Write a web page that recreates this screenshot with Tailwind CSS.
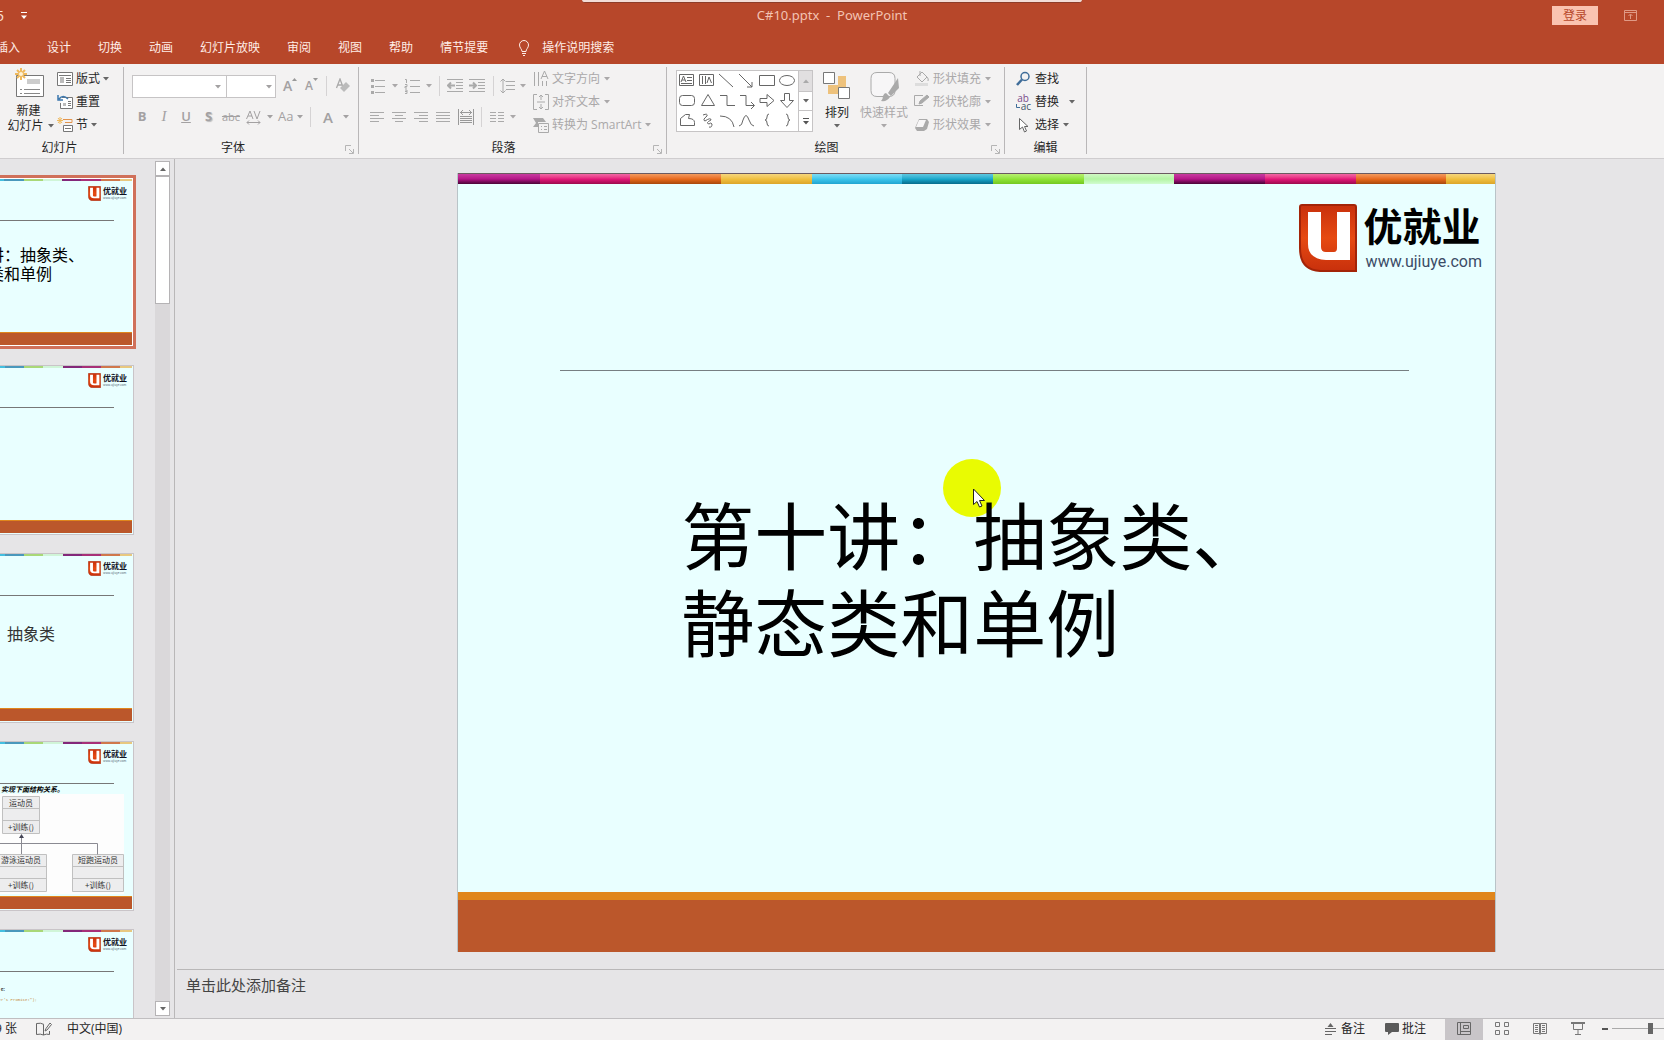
<!DOCTYPE html>
<html lang="zh-CN">
<head>
<meta charset="utf-8">
<meta name="viewport" content="width=device-width, initial-scale=1">
<title>C#10.pptx - PowerPoint</title>
<script src="https://cdn.jsdelivr.net/npm/@tailwindcss/browser@4"></script>
</head>
<body class="h-screen overflow-hidden flex flex-col bg-[#e6e5e7] text-xs text-[#262626] font-['Open_Sans','Noto_Sans_CJK_SC',sans-serif]">

<svg class="absolute w-0 h-0" aria-hidden="true">
  <linearGradient id="lg" x1="0" y1="0" x2="0" y2="1"><stop offset="0" stop-color="#c8300c"/><stop offset=".5" stop-color="#e64a12"/><stop offset="1" stop-color="#c8300c"/></linearGradient>
  <symbol id="caret" viewBox="0 0 6 4"><path d="M0 0h6L3 3.5z" fill="currentColor"/></symbol>
  <symbol id="launch" viewBox="0 0 9 9"><path d="M.5 6V.5H6M4 4l4 4M8.500 4v4.500H4" fill="none" stroke="#b5b5b5"/></symbol>
  <symbol id="ulogo" viewBox="0 0 58 68"><path d="M3 1h52q2 0 2 2v64H21Q1 66 1 44V3q0-2 2-2z" fill="url(#lg)" stroke="#a32408" stroke-width="2"/><path d="M9 8h13v35q0 5 5 5h8q3 0 3-4V8h13v48H27Q9 55 9 40z" fill="#fff"/></symbol>
</svg>

<header class="relative shrink-0 bg-[#b7472a] text-[#fbe3da]">
  <div class="absolute top-0 left-[35%] w-[30%] h-[3px] bg-[#f3dcd6] border-b border-[#8e3c28] rounded-b-sm"></div>
  <div class="grid grid-cols-[1fr_auto_1fr] items-center h-[31px]">
    <div class="flex items-center gap-4 text-sm"><span class="-ml-1 w-2">5</span>
      <button aria-label="自定义快速访问工具栏" class="w-2"><svg class="w-2 h-2" viewBox="0 0 8 8"><path d="M1 .5h6" stroke="#fff"/><path d="M1 3.500h6L4 7z" fill="#fff"/></svg></button>
    </div>
    <h1 class="text-[13px] text-[#f3c3b3] font-['Noto_Sans']">C#10.pptx&nbsp; -&nbsp; PowerPoint</h1>
    <div class="flex justify-end items-center gap-[26px] pr-[27px]">
      <button class="bg-[#fac3b0] text-[#b7472a] w-[46px] h-[19px] leading-[19px]">登录</button>
      <button aria-label="功能区显示选项"><svg class="w-[13px] h-3" viewBox="0 0 13 12" fill="none" stroke="#e09a86"><path d="M.5.5h12v10H.5zM.5 2.500h12M6.500 9V4.500M4.500 6l2-2 2 2"/></svg></button>
    </div>
  </div>
  <nav class="flex items-center gap-[27px] h-[33px] text-[#ffede7]">
    <a href="#" class="-ml-1">插入</a><a href="#">设计</a><a href="#">切换</a><a href="#">动画</a><a href="#">幻灯片放映</a><a href="#">审阅</a><a href="#">视图</a><a href="#">帮助</a><a href="#">情节提要</a>
    <a href="#" class="flex items-center gap-3 pl-[3px]"><svg class="w-3 h-4" viewBox="0 0 12 16" fill="none" stroke="#ffede7"><path d="M4 11.500C4 9 1.500 8 1.500 5a4.500 4.500 0 0 1 9 0c0 3-2.500 4-2.500 6.500zM4 13.500h4M5 15.500h2"/></svg>操作说明搜索</a>
  </nav>
</header>

<section class="shrink-0 flex pt-[3px] pb-1 h-[95px] bg-[#f3f2f2] border-b border-[#cfcdcf]">
  <!-- 幻灯片 -->
  <div class="w-[124px] border-r border-[#b9b7b8] flex flex-col">
    <div class="flex-1 flex">
      <button class="w-[57px] flex flex-col items-center justify-start leading-[15px]">
        <svg class="w-8 h-8 mb-1 shrink-0" viewBox="0 0 32 32"><path d="M3.500 8.500h27v21h-27z" fill="#fff" stroke="#777"/><path d="M14 12h13v5H14z" fill="#ccc"/><path d="M7 22.500h2m2 0h16M7 26.500h2m2 0h16" stroke="#888"/><path d="M8 1v12M2 7h12M4 3l8 8M12 3l-8 8" stroke="#efb95c" stroke-width="2"/><circle cx="8" cy="7" r="2.500" fill="#fff3d8" stroke="#efb95c"/></svg>
        <span>新建</span><span class="flex items-center gap-1 -mr-1 whitespace-nowrap">幻灯片<svg class="w-[6px] h-1 text-[#666]"><use href="#caret"/></svg></span>
      </button>
      <div class="flex flex-col">
        <button class="flex items-center gap-[3px] h-[23px]"><svg class="w-4 h-4" viewBox="0 0 16 16" fill="none" stroke="#777"><path d="M.5 1.500h15v13H.5zM2 4.500h12" fill="#fff"/><path d="M3 6h4v6H3z" fill="#bbb" stroke="none"/><path d="M9 7.500h5M9 9.500h5M9 11.500h5"/></svg>版式<svg class="w-[6px] h-1 text-[#666]"><use href="#caret"/></svg></button>
        <button class="flex items-center gap-[3px] h-[23px]"><svg class="w-4 h-4" viewBox="0 0 16 16" fill="none" stroke="#777"><path d="M5 3.500h10.500v11h-12V9" fill="#fff"/><path d="M6 9h3v3H6z" fill="#bbb" stroke="none"/><path d="M11 7.500h3M11 9.500h3M11 11.500h3"/><path d="M2 5q4-5 9 0M1 1v5h5" stroke="#3d78ae" stroke-width="1.500"/></svg>重置</button>
        <button class="flex items-center gap-[3px] h-[23px]"><svg class="w-4 h-4" viewBox="0 0 16 16" fill="none"><path d="M6 2.500h9v3H8" stroke="#e3944c"/><path d="M6.500 8.500h9v6h-9zM8 11.500h6" stroke="#777" fill="#fff"/><path d="M3 0v7M0 3.500h6M1 1l4 5M5 1L1 6" stroke="#efb95c"/></svg>节<svg class="w-[6px] h-1 text-[#666]"><use href="#caret"/></svg></button>
      </div>
    </div>
    <p class="text-center leading-3 pr-1">幻灯片</p>
  </div>

  <!-- 字体 -->
  <div class="relative w-[235px] border-r border-[#b9b7b8] flex flex-col text-[#a3a1a2]">
    <div class="flex items-center pl-2 pt-[7px] h-[31px]">
      <label class="relative"><select disabled aria-label="字体" class="block appearance-none w-[95px] h-[23px] bg-white border border-[#c6c4c5]"><option></option></select><svg class="absolute right-[6px] top-[10px] w-[6px] h-1"><use href="#caret"/></svg></label>
      <label class="relative -ml-px"><select disabled aria-label="字号" class="block appearance-none w-[50px] h-[23px] bg-white border border-[#c6c4c5]"><option></option></select><svg class="absolute right-1 top-[10px] w-[6px] h-1"><use href="#caret"/></svg></label>
      <button class="ml-[7px] w-[14px] flex text-sm leading-4 font-semibold">A<svg class="w-[5px] h-[3px] shrink-0" viewBox="0 0 5 3"><path d="M0 3h5L2.500 0z" fill="#999"/></svg></button>
      <button class="ml-2 w-[13px] flex text-xs leading-4 font-semibold">A<svg class="w-[5px] h-[3px] shrink-0" viewBox="0 0 5 3"><path d="M0 0h5L2.500 3z" fill="#999"/></svg></button>
      <span class="ml-2 w-px h-5 bg-[#d5d3d4]"></span>
      <button aria-label="清除格式" class="ml-2"><svg class="w-4 h-4" viewBox="0 0 16 16"><path d="M1.500 10L5 1l3 8M3 7h4" fill="none" stroke="#aaa" stroke-width="1.300"/><path d="M11 4l4 4-6 6-4-4z" fill="#bbb"/></svg></button>
    </div>
    <div class="h-9 flex items-center pl-[7px] pt-[2px] text-[13px]">
      <button class="w-[22px] font-bold">B</button><button class="w-[22px] italic font-['Liberation_Serif'] text-[15px]">I</button><button class="w-[22px] font-semibold underline">U</button><button class="w-[23px] font-bold text-shadow-[1px_1px_1px_#bbb]">S</button>
      <button class="w-[22px] text-[11px] line-through">abc</button>
      <button aria-label="字符间距" class="w-[34px] flex items-center gap-[6px] pl-1"><svg class="w-[15px] h-[15px]" viewBox="0 0 15 15" fill="none" stroke="#a3a1a2"><path d="M.5 9L4 1l3 8M2 6h4M8 1l3 8 3-8M1 12.500h13M3 10.500l-2 2 2 2M12 10.500l2 2-2 2"/></svg><svg class="w-[6px] h-1"><use href="#caret"/></svg></button>
      <button class="w-[30px] flex items-center gap-1 pl-[2px]">Aa<svg class="w-[6px] h-1 shrink-0"><use href="#caret"/></svg></button>
      <span class="ml-1 w-px h-5 bg-[#d5d3d4]"></span>
      <button class="ml-3 flex items-center gap-[10px] text-[15px] font-semibold">A<svg class="w-[6px] h-1"><use href="#caret"/></svg></button>
    </div>
    <p class="mt-auto text-center leading-3 text-[#262626] pr-4">字体</p>
    <svg class="absolute right-1 bottom-0 w-[9px] h-[9px]"><use href="#launch"/></svg>
  </div>

  <!-- 段落 -->
  <div class="relative w-[308px] border-r border-[#b9b7b8] flex flex-col text-[#aaa8a9]">
    <div class="flex-1 flex">
      <div class="w-[174px] pl-[11px] flex flex-col pt-[7px]">
        <div class="flex items-center h-[23px]">
          <button aria-label="项目符号" class="flex items-center gap-[6px]"><svg class="w-4 h-4" viewBox="0 0 16 16"><path d="M5 2.500h10M5 8.500h10M5 14.500h10" stroke="#aaa"/><path d="M1 1h3v3H1zM1 7h3v3H1zM1 13h3v3H1z" fill="#aaa"/></svg><svg class="w-[6px] h-1"><use href="#caret"/></svg></button>
          <button aria-label="编号" class="ml-[6px] flex items-center gap-[6px]"><svg class="w-4 h-4" viewBox="0 0 16 16" fill="none" stroke="#aaa"><path d="M6 2.500h10M6 8.500h10M6 14.500h10M1 1.500h1.500V5M1 6.500h2v2H1v1.500h2M1 12h2v3.500H1M1 13.500h2"/></svg><svg class="w-[6px] h-1"><use href="#caret"/></svg></button>
          <span class="ml-[7px] w-px h-5 bg-[#d5d3d4]"></span>
          <button aria-label="减少缩进" class="ml-[7px]"><svg class="w-4 h-4 block" viewBox="0 0 16 16" fill="none" stroke="#aaa"><path d="M0 1.500h16M9 4.500h7M9 7.500h7M9 10.500h7M0 13.500h16"/><path d="M8 7.500H1M4 4.500l-3 3 3 3" stroke-width="2"/></svg></button>
          <button aria-label="增加缩进" class="ml-[6px]"><svg class="w-4 h-4 block" viewBox="0 0 16 16" fill="none" stroke="#aaa"><path d="M0 1.500h16M9 4.500h7M9 7.500h7M9 10.500h7M0 13.500h16"/><path d="M0 7.500h7M4 4.500l3 3-3 3" stroke-width="2"/></svg></button>
          <span class="ml-2 w-px h-5 bg-[#d5d3d4]"></span>
          <button aria-label="行距" class="ml-[6px] flex items-center gap-1"><svg class="w-4 h-4" viewBox="0 0 16 16" fill="none" stroke="#aaa"><path d="M6 3.500h9M6 7.500h9M6 11.500h9M3 1v14M.5 3.500L3 1l2.500 2.500M.5 12.500L3 15l2.500-2.500"/></svg><svg class="w-[6px] h-1"><use href="#caret"/></svg></button>
        </div>
        <div class="flex items-center gap-2 h-[39px]">
          <button aria-label="左对齐"><svg class="w-[14px] h-4 block" viewBox="0 0 14 16" stroke="#aaa"><path d="M0 3.500h14M0 6.500h9M0 9.500h14M0 12.500h9"/></svg></button>
          <button aria-label="居中"><svg class="w-[14px] h-4 block" viewBox="0 0 14 16" stroke="#aaa"><path d="M0 3.500h14M3 6.500h8M0 9.500h14M3 12.500h8"/></svg></button>
          <button aria-label="右对齐"><svg class="w-[14px] h-4 block" viewBox="0 0 14 16" stroke="#aaa"><path d="M0 3.500h14M5 6.500h9M0 9.500h14M5 12.500h9"/></svg></button>
          <button aria-label="两端对齐"><svg class="w-[14px] h-4 block" viewBox="0 0 14 16" stroke="#aaa"><path d="M0 3.500h14M0 6.500h14M0 9.500h14M0 12.500h14"/></svg></button>
          <button aria-label="分散对齐"><svg class="w-4 h-4 block" viewBox="0 0 16 16" fill="none" stroke="#999"><path d="M.5 0v16M15.500 0v16M2 7.500h12M2 9.500h12M2 11.500h12M2 13.500h12M2 3.500h12M5 1L2.500 3.500 5 6M11 1l2.500 2.500L11 6"/></svg></button>
          <span class="-ml-px w-px h-5 bg-[#d5d3d4]"></span>
          <button aria-label="分栏" class="flex items-center gap-[6px]"><svg class="w-[14px] h-4" viewBox="0 0 14 16" stroke="#aaa"><path d="M0 3.500h6M8 3.500h6M0 6.500h6M8 6.500h6M0 9.500h6M8 9.500h6M0 12.500h6M8 12.500h6"/></svg><svg class="w-[6px] h-1"><use href="#caret"/></svg></button>
        </div>
      </div>
      <div class="flex flex-col">
        <button class="flex items-center gap-[3px] h-[23px]"><svg class="w-4 h-4" viewBox="0 0 16 16" fill="none" stroke="#aaa"><path d="M1.500 1v14M5.500 1v14M9.500 10v5M13.500 10v5M8 8l3.500-8L15 8M9 5.500h5"/></svg>文字方向<svg class="w-[6px] h-1 ml-px"><use href="#caret"/></svg></button>
        <button class="flex items-center gap-[3px] h-[23px]"><svg class="w-4 h-4" viewBox="0 0 16 16" fill="none" stroke="#aaa"><path d="M4 .5H.5v15H4M12 .5h3.500v15H12M8 1v5M6 3l2-2 2 2M8 15v-5M6 13l2 2 2-2M4 8h8"/></svg>对齐文本<svg class="w-[6px] h-1 ml-px"><use href="#caret"/></svg></button>
        <button class="flex items-center gap-[3px] h-[23px] whitespace-nowrap"><svg class="w-4 h-4" viewBox="0 0 16 16"><path d="M0 1h10l3 4H5v5H0l3-4z" fill="#aaa"/><path d="M5.500 6.500h10v9h-10zM8 9.500h1m2 0h3M8 12.500h1m2 0h3" fill="#f3f2f2" stroke="#aaa"/></svg>转换为 SmartArt<svg class="w-[6px] h-1 ml-px"><use href="#caret"/></svg></button>
      </div>
    </div>
    <p class="text-center leading-3 text-[#262626] pr-[18px]">段落</p>
    <svg class="absolute right-1 bottom-0 w-[9px] h-[9px]"><use href="#launch"/></svg>
  </div>

  <!-- 绘图 -->
  <div class="relative w-[338px] border-r border-[#b9b7b8] flex flex-col text-[#aaa8a9]">
    <div class="flex-1 flex pl-[9px]">
      <div class="flex mt-[3px] h-[62px] w-[137px] bg-white border border-[#c6c4c5]">
        <svg class="w-[121px] h-[60px]" viewBox="0 0 121 60" fill="none" stroke="#666">
          <path d="M2.500 3.500h14v11h-14zM4 11l2.500-6L9 11M5 9h3M10 6.500h5M10 9.500h5M4 12.500h11M22.500 3.500h14v11h-14zM25.500 5v8M28.500 5v8M30 12l2-6 2.500 6M42 3l14 13M62 3l13 13M75 11v5h-5M82.500 4.500h15v10h-15z"/>
          <ellipse cx="110" cy="9.500" rx="7.500" ry="5"/>
          <rect x="2.500" y="24.500" width="15" height="10" rx="3"/>
          <path d="M24.500 34.500L31 23.500 37.500 34.500zM43 24.500h7v10h8M63 24.500h6v10h8M74 31l3.500 3.500L74 38M83 27.500h7v-4l7 6-7 6v-4h-7zM107.500 22.500h5v7h4l-6.500 7-6.500-7h4z"/>
          <path d="M3.500 54.500v-7l5-4h4l-1 4q6 0 6 4v3zM26 44q5-2 4 1-5 4-2 5 6-4 6-1-6 3-2 4 2-2 3 0 0 4-3 3M43 45q12 0 14 11M62 55q3 0 4-6 3-9 6 0 2 6 5 6M92 43q-2 0-2 3 0 3-2 3 2 0 2 3 0 3 2 3M109 43q2 0 2 3 0 3 2 3-2 0-2 3 0 3-2 3"/>
        </svg>
        <div class="w-[14px] shrink-0 border-l border-[#c6c4c5] grid grid-rows-3 text-[#666]">
          <button aria-label="上一行" class="bg-[#e1dfe0] flex items-center justify-center text-[#aaa]"><svg class="w-[6px] h-1 rotate-180"><use href="#caret"/></svg></button>
          <button aria-label="下一行" class="border-y border-[#c6c4c5] flex items-center justify-center"><svg class="w-[6px] h-1"><use href="#caret"/></svg></button>
          <button aria-label="其他" class="flex items-center justify-center"><svg class="w-[6px] h-[7px]" viewBox="0 0 6 7"><path d="M0 0h6v1H0zM0 3h6L3 6.500z" fill="#555"/></svg></button>
        </div>
      </div>
      <button class="ml-[10px] flex flex-col items-center justify-start text-[#262626] leading-[15px]"><svg class="w-7 h-7 mt-[5px] mb-[5px]" viewBox="0 0 28 28"><path d="M5 4h18v18H5z" fill="#eec27c"/><path d="M12 4h3v9H5v-2h7z" fill="#f3f2f2"/><path d="M.5.500h11v11H.5zM15.500 15.500h11v11h-11z" fill="#fff" stroke="#777"/></svg>排列<svg class="w-[6px] h-1 mt-1 text-[#666]"><use href="#caret"/></svg></button>
      <button class="ml-[9px] flex flex-col items-center justify-start leading-[15px]"><svg class="w-[30px] h-[30px] mt-[5px] mb-[3px]" viewBox="0 0 30 30"><path d="M8 .5h12q6 0 6 6v12q0 6-6 6H8q-6 0-6-6v-12q0-6 6-6z" fill="#f7f6f7" stroke="#aaa"/><path d="M29 6l1 10-8 8-3-3zM17 21l4 4q-3 5-9 4 2-2 2-5 1-3 3-3z" fill="#aaa"/></svg>快速样式<svg class="w-[6px] h-1 mt-1"><use href="#caret"/></svg></button>
      <div class="ml-[6px] flex flex-col">
        <button class="flex items-center gap-[3px] h-[23px]"><svg class="w-4 h-4" viewBox="0 0 16 16" fill="none" stroke="#aaa"><path d="M3 6l5-5 5 5-5 5zM6 0v5M13 6q2 2 1 4"/><path d="M1 12h13v3H1z" fill="#ddd" stroke="none"/></svg>形状填充<svg class="w-[6px] h-1 ml-px"><use href="#caret"/></svg></button>
        <button class="flex items-center gap-[3px] h-[23px]"><svg class="w-4 h-4" viewBox="0 0 16 16" fill="none" stroke="#aaa"><path d="M9 1.500H.5v10H9"/><path d="M5 10l1-3 7-6 2 2-7 6z" fill="#aaa"/></svg>形状轮廓<svg class="w-[6px] h-1 ml-px"><use href="#caret"/></svg></button>
        <button class="flex items-center gap-[3px] h-[23px]"><svg class="w-4 h-4" viewBox="0 0 16 16"><path d="M5 2h8l2 3-2 7-3 2H3l-2-3z" fill="#aaa"/><path d="M5 3h7L9 10H2z" fill="#f7f6f7"/></svg>形状效果<svg class="w-[6px] h-1 ml-px"><use href="#caret"/></svg></button>
      </div>
    </div>
    <p class="text-center leading-3 text-[#262626] pr-[18px]">绘图</p>
    <svg class="absolute right-1 bottom-0 w-[9px] h-[9px]"><use href="#launch"/></svg>
  </div>

  <!-- 编辑 -->
  <div class="w-[82px] border-r border-[#b9b7b8] flex flex-col">
    <div class="flex-1 flex flex-col pl-[10px]">
      <button class="flex items-center gap-1 h-[23px]"><svg class="w-4 h-4" viewBox="0 0 16 16" fill="none" stroke="#3f6d99"><circle cx="10" cy="5.500" r="4" stroke-width="1.500"/><path d="M7 8.500L2 14" stroke-width="2.500"/></svg>查找</button>
      <button class="flex items-center gap-1 h-[23px]"><span class="relative w-4 flex flex-col text-[10px] leading-[8px] text-[#7a4b8c]"><span>ab</span><span class="text-right text-[#44546a]">ac</span><svg class="absolute left-0 bottom-0 w-[5px] h-[6px]" viewBox="0 0 5 6"><path d="M1.500 0v3.500H5" fill="none" stroke="#3f6d99"/></svg></span>替换<svg class="w-[6px] h-1 ml-[6px] text-[#666]"><use href="#caret"/></svg></button>
      <button class="flex items-center gap-1 h-[23px]"><svg class="w-4 h-4" viewBox="0 0 16 16" fill="#fff" stroke="#666"><path d="M4.500 1.500v11l3-2.500 2 5 2-1-2-4.500h3.500z"/></svg>选择<svg class="w-[6px] h-1 text-[#666]"><use href="#caret"/></svg></button>
    </div>
    <p class="text-center leading-3">编辑</p>
  </div>
</section>

<!-- 幻灯片母版页眉：彩条、徽标、分隔线 -->
<template id="master">
  <div class="flex h-[2px] shrink-0"><i class="flex-1 bg-[#a01c80]"></i><i class="flex-1 bg-[#d92478]"></i><i class="flex-1 bg-[#e0702c]"></i><i class="flex-1 bg-[#eec04c]"></i><i class="flex-1 bg-[#44bfe0]"></i><i class="flex-1 bg-[#4a98bc]"></i><i class="flex-1 bg-[#a9d878]"></i><i class="flex-1 bg-[#d0f5d8]"></i><i class="flex-1 bg-[#83287a]"></i><i class="flex-1 bg-[#a83078]"></i><i class="flex-1 bg-[#d0784c]"></i><i class="w-3 bg-[#e8c880]"></i></div>
  <div class="flex justify-end gap-[2px] h-[39px] pt-1 pr-1 font-['Noto_Sans_CJK_SC']"><svg class="w-[13px] h-[15px] mt-px"><use href="#ulogo"/></svg><div class="w-[25px] font-bold text-[8px] leading-[11px] whitespace-nowrap text-[#112]">优就业<p class="text-[3px] leading-[4px] font-normal text-[#567]">www.ujiuye.com</p></div></div>
  <div class="mx-[18px] h-px shrink-0 bg-[#777]"></div>
</template>

<main class="flex-1 min-h-0 flex">
  <!-- 缩略图窗格 -->
  <aside class="w-[175px] shrink-0 flex justify-between border-r border-[#b9b7b8]">
    <div class="w-[136px] overflow-hidden pt-4 flex flex-col gap-4 font-['KaiTi','Noto_Sans_CJK_SC',sans-serif] text-black">
      <div class="shrink-0 h-[174px] flex justify-end border-y-[3px] border-r-[3px] border-[#d0705a]">
        <div class="thumb w-[226px] shrink-0 flex flex-col bg-[#e9ffff] border border-white">
          <p class="mt-6 ml-[48px] text-base leading-[19px] whitespace-nowrap">第十讲：抽象类、<br>静态类和单例</p>
          <div class="mt-auto h-[13px] bg-[#bb572b] border-t border-[#e0861c]"></div>
        </div>
      </div>
      <div class="shrink-0 w-[134px] flex flex-col items-end gap-[18px]">
        <div class="thumb h-[170px] w-[226px] flex flex-col bg-[#e9ffff] border border-[#c9c4c8] pr-px pb-px">
          <div class="mt-auto h-[13px] bg-[#bb572b] border-t border-[#e0861c]"></div>
        </div>
        <div class="thumb h-[170px] w-[226px] flex flex-col bg-[#e9ffff] border border-[#c9c4c8] pr-px pb-px">
          <p class="mt-7 ml-[98px] text-base leading-[19px] text-[#333]">抽象类</p>
          <div class="mt-auto h-[13px] bg-[#bb572b] border-t border-[#e0861c]"></div>
        </div>
        <div class="thumb h-[170px] w-[226px] flex flex-col bg-[#e9ffff] border border-[#c9c4c8] pr-px pb-px">
          <p class="text-[7px] leading-[10px] font-bold italic text-right pr-[68px]">实现下面结构关系。</p>
          <svg class="self-end w-[134px] h-[100px] shrink-0" viewBox="-2 795 134 100" font-size="8" fill="#333" text-anchor="middle">
            <path d="M-2 795h126v100H-2z" fill="#fdfdfd"/>
            <path d="M2.500 797.500h37v37h-37zM2.500 809.500h37M2.500 821.500h37M-9.500 855.500h56v37h-56zM-9.500 867.500h56M-9.500 879.500h56M72.500 855.500h51v37h-51zM72.500 867.500h51M72.500 879.500h51" fill="#ededee" stroke="#c0c0c0"/>
            <path d="M-2 844.500h99.500v11M21.500 855v-17" fill="none" stroke="#8a8a92"/><path d="M19 839h5l-2.500-4z" fill="#445"/>
            <text x="21" y="807">运动员</text><text x="21" y="831">+训练()</text><text x="21" y="864">游泳运动员</text><text x="21" y="889">+训练()</text><text x="98" y="864">短跑运动员</text><text x="98" y="889">+训练()</text>
          </svg>
          <div class="mt-auto h-[13px] shrink-0 bg-[#bb572b] border-t border-[#e0861c]"></div>
        </div>
        <div class="thumb h-[170px] w-[226px] flex flex-col bg-[#e9ffff] border border-[#c9c4c8] pr-px pb-px">
          <p class="mt-3 pr-[127px] text-right text-[5px] leading-[10px]">e:</p>
          <p class="pr-[95px] text-right text-[4px] leading-[12px] font-['Liberation_Mono'] text-[#c78a3a]">er's Promise!");</p>
        </div>
      </div>
    </div>

    <div class="w-[15px] mr-1 my-[2px] flex flex-col bg-[#dad8da]">
      <button aria-label="向上滚动" class="h-[15px] bg-white border border-[#b5b3b5] flex items-center justify-center text-[#666]"><svg class="w-[6px] h-1 rotate-180"><use href="#caret"/></svg></button>
      <div class="h-[15%] bg-white border border-[#b5b3b5]"></div>
      <button aria-label="向下滚动" class="mt-auto h-[15px] bg-white border border-[#b5b3b5] flex items-center justify-center text-[#666]"><svg class="w-[6px] h-1"><use href="#caret"/></svg></button>
    </div>
  </aside>

  <div class="flex-1 min-w-0 flex flex-col pl-[2px]">
    <div class="flex-1 min-h-0 flex justify-end pt-[14px] pb-[17px] pr-[168px]">
      <article class="relative h-full aspect-[4/3] flex flex-col bg-[#e9ffff] border-x border-[#b9c4c8]">
        <div class="flex h-[11px] border-t border-[#6b5a60]">
          <i class="grow-[77] bg-linear-to-b from-[#c93aa0] via-[#b51488] to-[#4a0436]"></i><i class="grow-[86] bg-linear-to-b from-[#f265a5] via-[#e4177a] to-[#9c0a4c]"></i><i class="grow-[86] bg-linear-to-b from-[#f29a5c] via-[#e96a1c] to-[#a8480c]"></i><i class="grow-[86] bg-linear-to-b from-[#f6d67c] via-[#f0c040] to-[#dca528]"></i><i class="grow-[86] bg-linear-to-b from-[#7cdcf4] via-[#3cc6ec] to-[#20a4d0]"></i><i class="grow-[86] bg-linear-to-b from-[#5cc8e0] via-[#18a8cc] to-[#086c8c]"></i><i class="grow-[86] bg-linear-to-b from-[#b8f070] via-[#90e438] to-[#74c820]"></i><i class="grow-[86] bg-linear-to-b from-[#d0f8c4] via-[#b4f4a4] to-[#d0fcd0]"></i><i class="grow-[86] bg-linear-to-b from-[#c93aa0] via-[#b51488] to-[#4a0436]"></i><i class="grow-[86] bg-linear-to-b from-[#f265a5] via-[#e4177a] to-[#9c0a4c]"></i><i class="grow-[86] bg-linear-to-b from-[#f29a5c] via-[#e96a1c] to-[#a8480c]"></i><i class="grow-[46] bg-linear-to-b from-[#f6d67c] via-[#f0c040] to-[#dca528]"></i>
        </div>
        <div class="flex justify-end gap-[7px] h-[88px] pt-5 pr-[13px]">
          <svg class="w-[58px] h-[68px]"><use href="#ulogo"/></svg>
          <div class="font-bold text-[39px] leading-[44px] text-black">优就业<p class="pl-[2px] text-base leading-7 font-normal font-['Roboto'] text-[#3c4c66]">www.ujiuye.com</p></div>
        </div>
        <hr class="mt-[98px] ml-[102px] mr-[86px] border-[#777f82]">
        <div class="absolute left-[485px] top-[286px] size-[58px] rounded-full bg-[#e9fb02]"></div>
        <h2 class="relative mt-[118px] ml-[223px] text-[73px] leading-[87px] whitespace-nowrap text-black font-['KaiTi','Noto_Sans_CJK_SC',sans-serif]">第十讲：抽象类、<br>静态类和单例</h2>
        <svg class="absolute left-[515px] top-[315px] w-3 h-5" viewBox="0 0 12 20"><path d="M.5 1v15.500l3.500-3 2.500 5.500 2.500-1-2.500-5.500h5z" fill="#fff" stroke="#222"/></svg>
        <div class="mt-auto h-[60px] bg-[#bb572b] border-t-8 border-[#e0861c]"></div>
      </article>
    </div>
    <div class="shrink-0 h-[49px] border-t border-[#b9b7b8] pl-[9px] text-[15px] leading-[31px] text-[#444]">单击此处添加备注</div>
  </div>
</main>

<footer class="shrink-0 h-[22px] pb-[2px] flex items-center bg-[#f3f2f2] border-t border-[#c0bec0] overflow-hidden">
  <span class="-ml-[5px] w-[41px]">9&nbsp;张</span>
  <button aria-label="拼写检查" class="mr-[15px]"><svg class="w-4 h-[14px] block" viewBox="0 0 16 14" fill="none" stroke="#666"><path d="M8 2.500Q5 .5.5 1.500v11q4-1 7 .5 3-1.500 6-.5V9M7.500 3v10M9 9l1-2.500L14 1l1.500 1.500L11 8z"/></svg></button>
  <button>中文(中国)</button>
  <div class="ml-auto flex items-center self-stretch">
    <button class="flex items-center gap-[5px]"><svg class="w-[11px] h-3" viewBox="0 0 11 12"><path d="M2.500 4h6l-3-4z" fill="#666"/><path d="M0 5.500h11M0 8.500h11M0 11.500h7" stroke="#666"/></svg>备注</button>
    <button class="ml-5 flex items-center gap-[3px]"><svg class="w-[14px] h-3" viewBox="0 0 14 12"><path d="M1 0h12q1 0 1 1v7q0 1-1 1H7l-4 3V9H1Q0 9 0 8V1q0-1 1-1z" fill="#5a5a5a"/></svg>批注</button>
    <button aria-label="普通视图" class="ml-[19px] w-[38px] self-stretch -mb-[2px] pb-[2px] flex items-center justify-center bg-[#c8c5c8]"><svg class="w-[14px] h-[13px]" viewBox="0 0 14 13" fill="none" stroke="#666"><path d="M.5.500h13v12H.5zM3.500.5v12M3.500 9.500h10M6.500 3.500h5v3h-5z"/></svg></button>
    <button aria-label="幻灯片浏览" class="w-[38px] flex justify-center"><svg class="w-[14px] h-[13px]" viewBox="0 0 14 13" fill="none" stroke="#777"><path d="M.5.500h4v4h-4zM9.500.500h4v4h-4zM.5 8.500h4v4h-4zM9.500 8.500h4v4h-4z"/></svg></button>
    <button aria-label="阅读视图" class="w-[38px] flex justify-center"><svg class="w-[14px] h-[13px]" viewBox="0 0 14 13" fill="none" stroke="#777"><path d="M.5 1.500h6v10h-6zM7.500 1.500h6v10h-6zM7 1v12M2 3.500h3M2 5.500h3M2 7.500h3M2 9.500h3M9 3.500h3M9 5.500h3M9 7.500h3M9 9.500h3"/></svg></button>
    <button aria-label="幻灯片放映" class="w-[38px] flex justify-center"><svg class="w-[14px] h-[13px]" viewBox="0 0 14 13" fill="none" stroke="#777"><path d="M0 1h14" stroke-width="2"/><path d="M2.500 2v5.500h9V2M7 7v5M4 12.500h6"/></svg></button>
    <button aria-label="缩小" class="ml-[5px] mr-1 w-[6px] h-[2px] bg-[#555]"></button>
    <div class="w-[52px] overflow-hidden flex items-center"><input type="range" aria-label="缩放" value="38" class="shrink-0 w-[100px] h-3 appearance-none bg-transparent [&::-webkit-slider-runnable-track]:h-px [&::-webkit-slider-runnable-track]:bg-[#aaa] [&::-webkit-slider-thumb]:appearance-none [&::-webkit-slider-thumb]:w-[5px] [&::-webkit-slider-thumb]:h-[11px] [&::-webkit-slider-thumb]:-mt-[5px] [&::-webkit-slider-thumb]:bg-[#666]"></div>
  </div>
</footer>
<script>
  const master = document.getElementById('master');
  document.querySelectorAll('.thumb').forEach(t => t.prepend(master.content.cloneNode(true)));
</script>
</body>
</html>
